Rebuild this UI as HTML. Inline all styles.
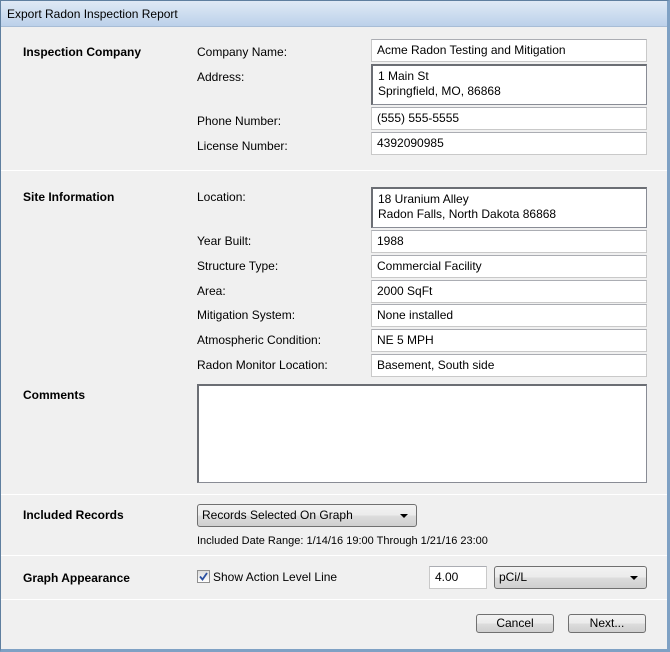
<!DOCTYPE html>
<html><head><style>
*{box-sizing:border-box;margin:0;padding:0}
body{width:670px;height:652px;background:#f0f0f0;font-family:"Liberation Sans",sans-serif;font-size:12px;color:#000;position:relative;overflow:hidden}
.frame{position:absolute;left:0;top:0;width:670px;height:652px;border:1px solid #5f7f9f;border-right:3px solid #7fa1c4;border-bottom:3px solid #7fa1c4}
.title{position:absolute;left:1px;top:1px;width:666px;height:26px;background:linear-gradient(#dfe9f5,#bcd1ea);border-bottom:1px solid #a8bdd6;padding:6px 0 0 6px;font-size:12px}
.a{position:absolute;white-space:nowrap}
.b{font-weight:bold}
.in{position:absolute;background:#fff;border:1px solid #c9c9c9;border-top-color:#abadb3;padding:3px 5px;line-height:15px;white-space:nowrap}
.ml{border:1px solid #898c95;border-top:2px solid #6b6e74;border-left:2px solid #6b6e74}
.sep{position:absolute;left:1px;width:666px;height:1px;background:#a0a0a0;border-bottom:1px solid #fff}
.dd{position:absolute;border:1px solid #707070;border-radius:3px;background:linear-gradient(#f2f2f2,#ebebeb 50%,#dddddd 50%,#cfcfcf);padding:3px 4px;line-height:15px}
.dd:after{content:"";position:absolute;right:8px;top:9px;border-left:4px solid transparent;border-right:4px solid transparent;border-top:4px solid #000}
.btn{position:absolute;border:1px solid #707070;border-radius:3px;background:linear-gradient(#f2f2f2,#ebebeb 50%,#dddddd 50%,#cfcfcf);text-align:center;line-height:17px}
</style></head><body>
<div class="frame"></div>
<div class="title">Export Radon Inspection Report</div>

<div class="a b" style="left:23px;top:45px">Inspection Company</div>
<div class="a" style="left:197px;top:45px">Company Name:</div>
<div class="a" style="left:197px;top:70px">Address:</div>
<div class="a" style="left:197px;top:114px">Phone Number:</div>
<div class="a" style="left:197px;top:139px">License Number:</div>
<div class="in" style="left:371px;top:39px;width:276px;height:23px">Acme Radon Testing and Mitigation</div>
<div class="in ml" style="left:371px;top:64px;width:276px;height:41px">1 Main St<br>Springfield, MO, 86868</div>
<div class="in" style="left:371px;top:107px;width:276px;height:23px">(555) 555-5555</div>
<div class="in" style="left:371px;top:132px;width:276px;height:23px">4392090985</div>
<div class="sep" style="top:170px"></div>

<div class="a b" style="left:23px;top:190px">Site Information</div>
<div class="a" style="left:197px;top:190px">Location:</div>
<div class="a" style="left:197px;top:234px">Year Built:</div>
<div class="a" style="left:197px;top:259px">Structure Type:</div>
<div class="a" style="left:197px;top:284px">Area:</div>
<div class="a" style="left:197px;top:308px">Mitigation System:</div>
<div class="a" style="left:197px;top:333px">Atmospheric Condition:</div>
<div class="a" style="left:197px;top:358px">Radon Monitor Location:</div>
<div class="in ml" style="left:371px;top:187px;width:276px;height:41px">18 Uranium Alley<br>Radon Falls, North Dakota 86868</div>
<div class="in" style="left:371px;top:230px;width:276px;height:23px">1988</div>
<div class="in" style="left:371px;top:255px;width:276px;height:23px">Commercial Facility</div>
<div class="in" style="left:371px;top:280px;width:276px;height:23px">2000 SqFt</div>
<div class="in" style="left:371px;top:304px;width:276px;height:23px">None installed</div>
<div class="in" style="left:371px;top:329px;width:276px;height:23px">NE 5 MPH</div>
<div class="in" style="left:371px;top:354px;width:276px;height:23px">Basement, South side</div>

<div class="a b" style="left:23px;top:388px">Comments</div>
<div class="in ml" style="left:197px;top:384px;width:450px;height:99px"></div>
<div class="sep" style="top:494px"></div>

<div class="a b" style="left:23px;top:508px">Included Records</div>
<div class="dd" style="left:197px;top:504px;width:220px;height:23px">Records Selected On Graph</div>
<div class="a" style="left:197px;top:535px;font-size:11px">Included Date Range: 1/14/16 19:00 Through 1/21/16 23:00</div>
<div class="sep" style="top:555px"></div>

<div class="a b" style="left:23px;top:571px">Graph Appearance</div>
<div class="a" style="left:197px;top:570px;width:13px;height:13px;border:1px solid #8f8f8f;background:linear-gradient(#dcdcdc,#fff)"><svg width="11" height="11" style="position:absolute;left:0;top:0"><path d="M2 5.5L4.5 8.5L9 2" stroke="#2a4fa0" stroke-width="1.8" fill="none"/></svg></div>
<div class="a" style="left:213px;top:570px">Show Action Level Line</div>
<div class="in" style="left:429px;top:566px;width:58px;height:23px">4.00</div>
<div class="dd" style="left:494px;top:566px;width:153px;height:23px">pCi/L</div>
<div class="sep" style="top:599px"></div>

<div class="btn" style="left:476px;top:614px;width:78px;height:19px">Cancel</div>
<div class="btn" style="left:568px;top:614px;width:78px;height:19px">Next...</div>
</body></html>
